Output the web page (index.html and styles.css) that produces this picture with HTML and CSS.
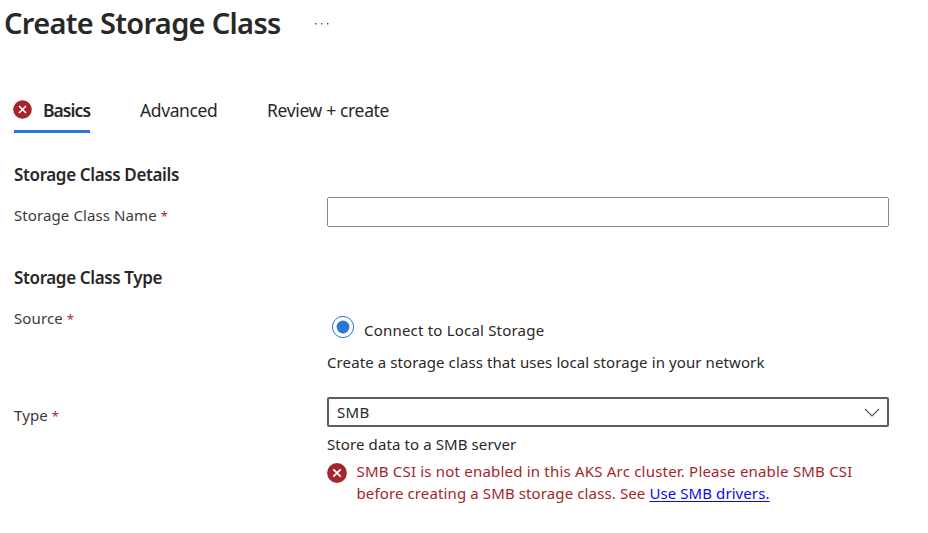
FILE: index.html
```html
<!DOCTYPE html>
<html lang="en">
<head>
<meta charset="utf-8">
<title>Create Storage Class</title>
<link rel="stylesheet" href="styles.css">
</head>
<body>
<header class="header">
  <h1 class="title">Create Storage Class</h1>
  <svg class="more" width="14" height="2" viewBox="0 0 14 2" fill="#55514e"><rect x="0" y="0" width="1.4" height="1.5"/><rect x="6" y="0" width="1.4" height="1.5"/><rect x="12" y="0" width="1.4" height="1.5"/></svg>
</header>
<nav class="tabs">
  <a class="tab active">
    <svg class="tab-icon" width="19" height="19" viewBox="0 0 20 20"><circle cx="10" cy="10" r="9.8" fill="#a4262c"/><path d="M6.3 6.3l7.4 7.4M13.7 6.3l-7.4 7.4" stroke="#fff" stroke-width="1.7"/></svg>
    <span class="tab-basics">Basics</span>
  </a>
  <a class="tab tab-advanced">Advanced</a>
  <a class="tab tab-review">Review + create</a>
</nav>
<main class="form">
  <h2 class="section section-details">Storage Class Details</h2>
  <div class="row row-name">
    <label class="label">Storage Class Name <span class="required">*</span></label>
    <input class="input" type="text">
  </div>
  <h2 class="section section-type">Storage Class Type</h2>
  <div class="row row-source">
    <label class="label">Source <span class="required">*</span></label>
    <div class="field">
      <div class="option">
        <svg class="radio" width="24" height="24" viewBox="0 0 24 24"><circle cx="12" cy="12" r="10.6" fill="none" stroke="#2a78d6"/><circle cx="12" cy="12" r="6.4" fill="#2a78d6"/></svg>
        <span class="option-text">Connect to Local Storage</span>
      </div>
      <p class="hint hint-source">Create a storage class that uses local storage in your network</p>
    </div>
  </div>
  <div class="row row-kind">
    <label class="label">Type <span class="required">*</span></label>
    <div class="field">
      <div class="select"><span class="select-text">SMB</span><svg class="chevron" width="16" height="10" viewBox="0 0 16 10" fill="none" stroke="#55514e" stroke-width="1.1"><path d="M1 1l7 7 7-7"/></svg></div>
      <p class="hint hint-type">Store data to a SMB server</p>
      <div class="error">
        <svg class="error-icon" width="20" height="20" viewBox="0 0 20 20"><circle cx="10" cy="10" r="9.9" fill="#a4262c"/><path d="M6.3 6.3l7.4 7.4M13.7 6.3l-7.4 7.4" stroke="#fff" stroke-width="1.8"/></svg>
        <p class="error-text"><span class="error-first">SMB CSI is not enabled in this AKS Arc cluster. Please enable SMB CSI</span><br><span class="error-second">before creating a SMB storage class. See <a class="link" href="#">Use SMB drivers.</a></span></p>
      </div>
    </div>
  </div>
</main>
</body>
</html>
```
FILE: styles.css
```css
* { box-sizing: border-box; }
body { margin: 0; background: #fff; color: #292827; font: 15px/20px "Noto Sans", "Open Sans", sans-serif; white-space: nowrap; }
h1, h2, p { margin: 0; }
.header { display: flex; height: 95px; padding: 2px 0 0 4px; }
.title { width: 311px; font-size: 29px; line-height: 41px; font-weight: 600; letter-spacing: -0.68px; }
.more { margin-top: 21px; }
.tabs { display: flex; height: 38px; margin-left: 14px; font-size: 17.5px; line-height: 30px; letter-spacing: -0.4px; }
.tab.active { display: flex; width: 76px; border-bottom: 3px solid #2a78d6; font-weight: 600; }
.tab-icon { flex: none; margin: 4.5px 11px 0 -1px; }
.tab-basics { letter-spacing: -0.95px; }
.tab-advanced { width: 127px; margin-left: 50px; }
.tab-review { letter-spacing: -0.35px; }
.form { padding: 0 0 0 14px; }
.section { height: 24px; font-size: 17px; line-height: 24px; font-weight: 600; letter-spacing: -0.37px; }
.section-details { margin-top: 30px; }
.row { display: grid; grid-template-columns: 313px 562px; }
.label { color: #3b3a39; letter-spacing: 0.1px; }
.required { color: #a4262c; font-size: 13px; }
.row-name { height: 69px; margin-top: 10px; }
.row-name .label, .row-kind .label { padding-top: 8px; }
.input { height: 30px; border: 1px solid #8a8886; border-radius: 2px; background: #fff; outline: 0; }
.row-source { height: 89px; margin-top: 18px; }
.option { display: flex; height: 38px; margin-left: 4px; }
.radio { margin: 6.5px 9px 0 0; }
.option-text { padding-top: 12px; letter-spacing: 0.2px; }
.hint { letter-spacing: 0.1px; }
.hint-source { margin-top: 6px; }
.select { display: flex; align-items: center; justify-content: space-between; height: 30px; border: 2px solid #605e5c; border-radius: 2px; padding: 0 8px; }
.select-text { letter-spacing: 0.3px; }
.chevron { margin: 2px -1px 0 0; }
.hint-type { margin-top: 7px; }
.error { display: flex; margin-top: 6px; color: #a4262c; }
.error-icon { flex: none; margin: 3px 10px 0 -0.5px; }
.error-text { line-height: 22px; }
.error-first { letter-spacing: 0.2px; }
.error-second { letter-spacing: 0.12px; }
.link { color: #1208ec; letter-spacing: 0.08px; text-underline-offset: 2px; }
```
